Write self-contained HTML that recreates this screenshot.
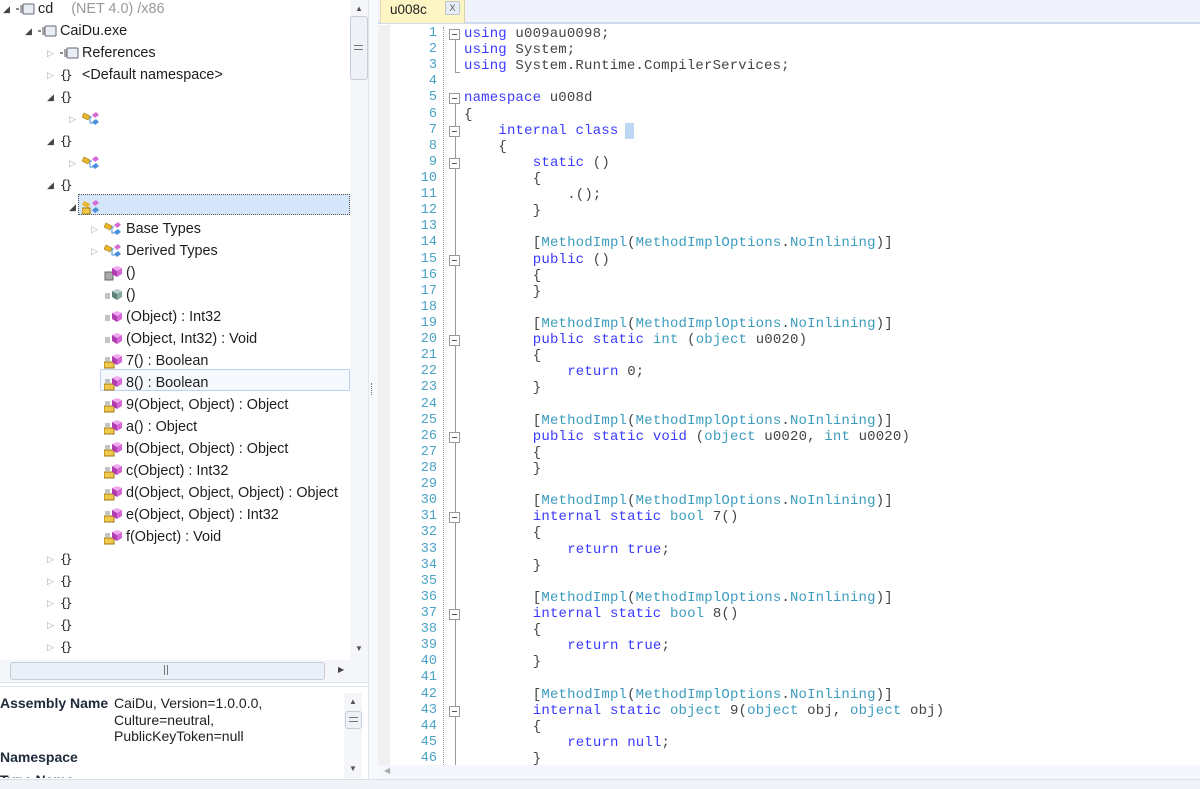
<!DOCTYPE html>
<html><head><meta charset="utf-8">
<style>
*{margin:0;padding:0;box-sizing:border-box}
body{width:1200px;height:789px;overflow:hidden;background:#fff;font-family:"Liberation Sans",sans-serif;position:relative}
.r{position:absolute;height:22px;line-height:20px;font-size:14.4px;color:#1e1e1e;white-space:nowrap}
.tri{position:absolute;font-size:9px;color:#444}
.to{color:#aaa}
.ns{font-family:"DejaVu Sans Mono",monospace;font-size:12px;color:#222;letter-spacing:-2px;display:inline-block;width:22px}
.iw{display:inline-block;width:22px;vertical-align:middle}
.ic{display:block}
.sel{position:absolute;left:78px;top:194px;width:272px;height:21px;background:#d6e6fa;border:1px dotted #555}
.hov{position:absolute;left:100px;top:369px;width:250px;height:22px;border:1px solid #bcd3f0;border-radius:2px;background:#f5f9fe}
.code{position:absolute;font-family:"Liberation Mono",monospace;font-size:14px;letter-spacing:0.17px;color:#444;white-space:pre;line-height:16px}
.ln{position:absolute;left:390px;width:47px;text-align:right;font-family:"Liberation Mono",monospace;font-size:13.5px;color:#4aa3c4;line-height:16px}
.k{color:#3a3aff}.t{color:#3b9cbd}
.fb{position:absolute;left:449px;width:11px;height:11px;border:1px solid #999;background:#fff}
.fb:after{content:"";position:absolute;left:2px;top:4px;width:5px;height:1px;background:#555}
</style></head><body>
<div style="position:absolute;left:0;top:0;width:350px;height:660px;overflow:hidden">
<div class="sel"></div><div class="hov"></div>
<div id="t"></div>
</div>
<div style="position:absolute;left:350px;top:0;width:18px;height:660px;background:#f4f6f9"></div>
<div style="position:absolute;left:355px;top:4px;font-size:8px;color:#555">▲</div>
<div style="position:absolute;left:350px;top:16px;width:18px;height:64px;border:1px solid #c5cdd8;border-radius:3px;background:#eef2f7"></div>
<div style="position:absolute;left:354px;top:45px;width:9px;height:5px;border-top:1px solid #777;border-bottom:1px solid #777"></div>
<div style="position:absolute;left:355px;top:644px;font-size:8px;color:#555">▼</div>
<div style="position:absolute;left:0;top:660px;width:368px;height:22px;background:#f4f6f9"></div>
<div style="position:absolute;left:10px;top:662px;width:315px;height:18px;border:1px solid #c5cdd8;border-radius:3px;background:#eaf0f7"></div>
<div style="position:absolute;left:164px;top:665px;width:4px;height:10px;border-left:1px solid #777;border-right:1px solid #777"></div>
<div style="position:absolute;left:338px;top:665px;font-size:8px;color:#444">▶</div>
<div style="position:absolute;left:0;top:682px;width:368px;height:1px;background:#dde3ea"></div>
<div style="position:absolute;left:173px;top:680px;font-size:8px;color:#999;letter-spacing:-1px">....</div>
<div style="position:absolute;left:0;top:686px;width:368px;height:1px;background:#dde3ea"></div>
<div style="position:absolute;left:0;top:695px;font-size:14px;font-weight:bold;color:#1e2a3a">Assembly Name</div>
<div style="position:absolute;left:114px;top:695px;font-size:14px;line-height:16.5px;color:#1e1e1e">CaiDu, Version=1.0.0.0,<br>Culture=neutral,<br>PublicKeyToken=null</div>
<div style="position:absolute;left:0;top:749px;font-size:14px;font-weight:bold;color:#1e2a3a">Namespace</div>
<div style="position:absolute;left:0;top:772px;font-size:14px;font-weight:bold;color:#1e2a3a;height:6px;overflow:hidden">Type Name</div>
<div style="position:absolute;left:344px;top:693px;width:18px;height:85px;background:#f4f6f9"></div>
<div style="position:absolute;left:349px;top:697px;font-size:8px;color:#555">▲</div>
<div style="position:absolute;left:345px;top:711px;width:17px;height:18px;border:1px solid #c5cdd8;border-radius:3px;background:#eef2f7"></div>
<div style="position:absolute;left:349px;top:717px;width:9px;height:5px;border-top:1px solid #777;border-bottom:1px solid #777"></div>
<div style="position:absolute;left:349px;top:764px;font-size:8px;color:#555">▼</div>
<div style="position:absolute;left:0;top:779px;width:1200px;height:10px;background:#f0f3f8;border-top:1px solid #d8dfe9"></div>
<div style="position:absolute;left:368px;top:0;width:10px;height:779px;background:#f7f9fc;border-left:1px solid #e0e6ee"></div>
<div style="position:absolute;left:371px;top:383px;width:1px;height:12px;border-left:1px dotted #777"></div>
<div style="position:absolute;left:379px;top:381px;font-size:11px;color:#3a8fd0;font-weight:bold">‹</div>
<div style="position:absolute;left:378px;top:0;width:822px;height:24px;background:#f0f3fb;border-bottom:2px solid #cfdcef"></div>
<div style="position:absolute;left:380px;top:0;width:85px;height:23px;background:#fdf5c4;border-right:1px solid #d7d3a7;border-left:1px solid #e0dcb0"></div>
<div style="position:absolute;left:390px;top:2px;font-size:13.5px;color:#222">u008c</div>
<div style="position:absolute;left:445px;top:1px;width:15px;height:14px;border:1px solid #b8c4d4;border-radius:2px;background:#e8eef6;font-size:9px;color:#555;text-align:center;line-height:12px">X</div>
<div style="position:absolute;left:378px;top:25px;width:12px;height:740px;background:#f0f0f0"></div>
<div style="position:absolute;left:443px;top:27px;height:738px;border-left:1px dotted #999"></div>
<div style="position:absolute;left:455px;top:39px;width:1px;height:33px;background:#999"></div>
<div style="position:absolute;left:455px;top:72px;width:5px;height:1px;background:#999"></div>
<div style="position:absolute;left:455px;top:103px;width:1px;height:662px;background:#999"></div>
<div style="position:absolute;left:378px;top:765px;width:822px;height:14px;background:#f4f7fb"></div>
<div style="position:absolute;left:384px;top:766px;font-size:8px;color:#aaa">◀</div>
<div style="position:absolute;left:625px;top:123px;width:9px;height:16px;background:#bcd6f4"></div>
<div id="c"></div>
<script>
var h='';
function ico(k){
 var s='';
 if(k=='asm')s='<svg class="ic" width="20" height="12"><rect x="0" y="5" width="3" height="2" fill="#888"/><rect x="4" y="2" width="3" height="8" fill="#aaa"/><rect x="7" y="1" width="11" height="10" rx="1" fill="#e9eef5" stroke="#667"/></svg>';
 if(k=='cls')s='<svg class="ic" width="22" height="16"><path d="M2 2l6 3-2 4-6-3z" fill="#e9b72a" stroke="#a07a10" stroke-width=".6"/><path d="M10 4l4-3 3 3-4 3z" fill="#d56bd3"/><path d="M10 11l4-3 3 3-4 3z" fill="#4a8fd9"/><path d="M8 6v6h3M8 6h2" stroke="#4a8fd9" fill="none"/></svg>';
 if(k=='m')s='<svg class="ic" width="20" height="16"><path d="M1 7h5M1 9h5M1 11h5" stroke="#888"/><path d="M8 4l5-2 5 2-5 3z" fill="#f0a8f0"/><path d="M8 4l5 3v6l-5-3z" fill="#b03cb0"/><path d="M18 4l-5 3v6l5-3z" fill="#d665d6"/></svg>';
 if(k=='mc')s='<svg class="ic" width="20" height="16"><path d="M1 7h5M1 9h5M1 11h5" stroke="#888"/><path d="M8 4l5-2 5 2-5 3z" fill="#b8d0cc"/><path d="M8 4l5 3v6l-5-3z" fill="#5e807a"/><path d="M18 4l-5 3v6l5-3z" fill="#86a6a0"/></svg>';
 if(k=='ml')s='<svg class="ic" width="20" height="16"><rect x="1" y="7" width="8" height="8" fill="#aaa" stroke="#666"/><path d="M8 3l5-2 5 2-5 3z" fill="#f0a8f0"/><path d="M8 3l5 3v6l-5-3z" fill="#b03cb0"/><path d="M18 3l-5 3v6l5-3z" fill="#d665d6"/></svg>';
 if(k=='mi')s='<svg class="ic" width="20" height="16"><path d="M1 5h5M1 7h5" stroke="#888"/><rect x="0" y="9" width="10" height="6" fill="#f2c84b" stroke="#9b7a14"/><path d="M8 3l5-2 5 2-5 3z" fill="#f0a8f0"/><path d="M8 3l5 3v6l-5-3z" fill="#b03cb0"/><path d="M18 3l-5 3v6l5-3z" fill="#d665d6"/></svg>';
 if(k=='ci')s='<svg class="ic" width="22" height="16"><path d="M2 2l6 3-2 4-6-3z" fill="#e9b72a"/><rect x="0" y="9" width="8" height="6" fill="#f2c84b" stroke="#9b7a14"/><path d="M10 4l4-3 3 3-4 3z" fill="#d56bd3"/><path d="M10 11l4-3 3 3-4 3z" fill="#4a8fd9"/></svg>';
 return '<span class="iw">'+s+'</span>';
}
var rows=[
[0,'o','asm','cd <span style="color:#999;padding-left:14px">(NET 4.0) /x86</span>'],
[2,'o','asm','CaiDu.exe'],
[4,'c','asm','References'],
[4,'c','ns','&lt;Default namespace&gt;'],
[4,'o','ns',''],[6,'c','cls',''],
[4,'o','ns',''],[6,'c','cls',''],
[4,'o','ns',''],[6,'o','ci',''],
[8,'c','cls','Base Types'],[8,'c','cls','Derived Types'],
[8,'','ml','()'],[8,'','mc','()'],[8,'','m','(Object) : Int32'],[8,'','m','(Object, Int32) : Void'],
[8,'','mi','7() : Boolean'],[8,'','mi','8() : Boolean'],[8,'','mi','9(Object, Object) : Object'],
[8,'','mi','a() : Object'],[8,'','mi','b(Object, Object) : Object'],[8,'','mi','c(Object) : Int32'],
[8,'','mi','d(Object, Object, Object) : Object'],[8,'','mi','e(Object, Object) : Int32'],[8,'','mi','f(Object) : Void'],
[4,'c','ns',''],[4,'c','ns',''],[4,'c','ns',''],[4,'c','ns',''],[4,'c','ns',''],[4,'c','ns','']];
rows.forEach(function(r,i){
 var y=i*22-1,x=r[0]*11+3;
 if(r[1])h+='<div class="tri '+(r[1]=='c'?'to':'')+'" style="left:'+(x)+'px;top:'+(y+5)+'px">'+(r[1]=='o'?'◢':'▷')+'</div>';
 var icon=r[2]=='ns'?'<span class="ns">{}</span>':ico(r[2]);
 h+='<div class="r" style="left:'+(x+13)+'px;top:'+y+'px">'+icon+r[3]+'</div>';
});
document.getElementById('t').innerHTML=h;
var K=function(s){return '<span class="k">'+s+'</span>'},Y=function(s){return '<span class="t">'+s+'</span>'};
var A='['+Y('MethodImpl')+'('+Y('MethodImplOptions')+'.'+Y('NoInlining')+')]';
var L=[
[0,K('using')+' u009au0098;',1],[0,K('using')+' System;'],[0,K('using')+' System.Runtime.CompilerServices;'],[0,''],
[0,K('namespace')+' u008d',1],[0,'{'],[1,K('internal')+' '+K('class'),1],[1,'{'],
[2,K('static')+' ()',1],[2,'{'],[3,'.();'],[2,'}'],[0,''],
[2,A],[2,K('public')+' ()',1],[2,'{'],[2,'}'],[0,''],
[2,A],[2,K('public')+' '+K('static')+' '+Y('int')+' ('+Y('object')+' u0020)',1],[2,'{'],[3,K('return')+' 0;'],[2,'}'],[0,''],
[2,A],[2,K('public')+' '+K('static')+' '+K('void')+' ('+Y('object')+' u0020, '+Y('int')+' u0020)',1],[2,'{'],[2,'}'],[0,''],
[2,A],[2,K('internal')+' '+K('static')+' '+Y('bool')+' 7()',1],[2,'{'],[3,K('return')+' '+K('true')+';'],[2,'}'],[0,''],
[2,A],[2,K('internal')+' '+K('static')+' '+Y('bool')+' 8()',1],[2,'{'],[3,K('return')+' '+K('true')+';'],[2,'}'],[0,''],
[2,A],[2,K('internal')+' '+K('static')+' '+Y('object')+' 9('+Y('object')+' obj, '+Y('object')+' obj)',1],[2,'{'],[3,K('return')+' '+K('null')+';'],[2,'}']];
var c='';
L.forEach(function(l,i){
 var y=26+i*16.11;
 c+='<div class="ln" style="top:'+y+'px">'+(i+1)+'</div>';
 if(l[2])c+='<div class="fb" style="top:'+(y+3)+'px"></div>';
 c+='<div class="code" style="left:'+(464+l[0]*34.4)+'px;top:'+y+'px">'+l[1]+'</div>';
});
document.getElementById('c').innerHTML='<div style="position:absolute;left:0;top:0;width:1200px;height:765px;overflow:hidden">'+c+'</div>';
</script>
</body></html>
